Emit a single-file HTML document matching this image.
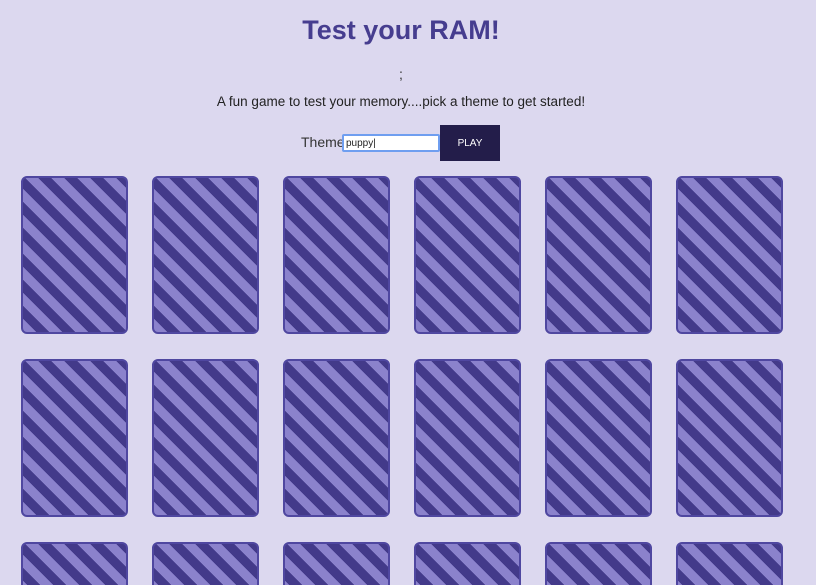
<!DOCTYPE html>
<html><head><style>
html,body{margin:0;padding:0;height:585px;overflow:hidden;}
body{width:816px;background:#dcd8ef;font-family:"Liberation Sans",sans-serif;position:relative;}
.t{position:absolute;left:0;width:802px;text-align:center;}
h1{margin:0;font-size:27px;font-weight:bold;color:#463d8f;top:15px;}
.semi{top:66px;font-size:14px;color:#333;}
.sub{top:94px;font-size:13.5px;color:#222;}
.theme{position:absolute;left:301px;top:134px;font-size:14px;color:#333;}
.inp{position:absolute;left:342px;top:134px;width:92px;height:14px;background:#fff;border:2px solid #6f9ef0;border-radius:2px;font-size:10px;line-height:15px;padding-left:2px;color:#222;}
.btn{position:absolute;left:440px;top:125px;width:60px;height:36px;background:#231d4a;color:#fff;font-size:10px;line-height:37px;text-align:center;}
.c{position:absolute;width:103px;height:154px;border:2px solid #4f47a0;border-radius:6px;background:repeating-linear-gradient(45deg,#8b82cc 0 9.2px,#433a8a 9.2px 18.4px);box-sizing:content-box;}
</style></head><body>
<h1 class="t">Test your RAM!</h1>
<div class="t semi">;</div>
<div class="t sub">A fun game to test your memory....pick a theme to get started!</div>
<div class="theme">Theme</div>
<div class="inp">puppy|</div>
<div class="btn">PLAY</div>
<div class="c" style="left:21px;top:176px"></div>
<div class="c" style="left:152px;top:176px"></div>
<div class="c" style="left:283px;top:176px"></div>
<div class="c" style="left:414px;top:176px"></div>
<div class="c" style="left:545px;top:176px"></div>
<div class="c" style="left:676px;top:176px"></div>
<div class="c" style="left:21px;top:359px"></div>
<div class="c" style="left:152px;top:359px"></div>
<div class="c" style="left:283px;top:359px"></div>
<div class="c" style="left:414px;top:359px"></div>
<div class="c" style="left:545px;top:359px"></div>
<div class="c" style="left:676px;top:359px"></div>
<div class="c" style="left:21px;top:542px"></div>
<div class="c" style="left:152px;top:542px"></div>
<div class="c" style="left:283px;top:542px"></div>
<div class="c" style="left:414px;top:542px"></div>
<div class="c" style="left:545px;top:542px"></div>
<div class="c" style="left:676px;top:542px"></div>
</body></html>
